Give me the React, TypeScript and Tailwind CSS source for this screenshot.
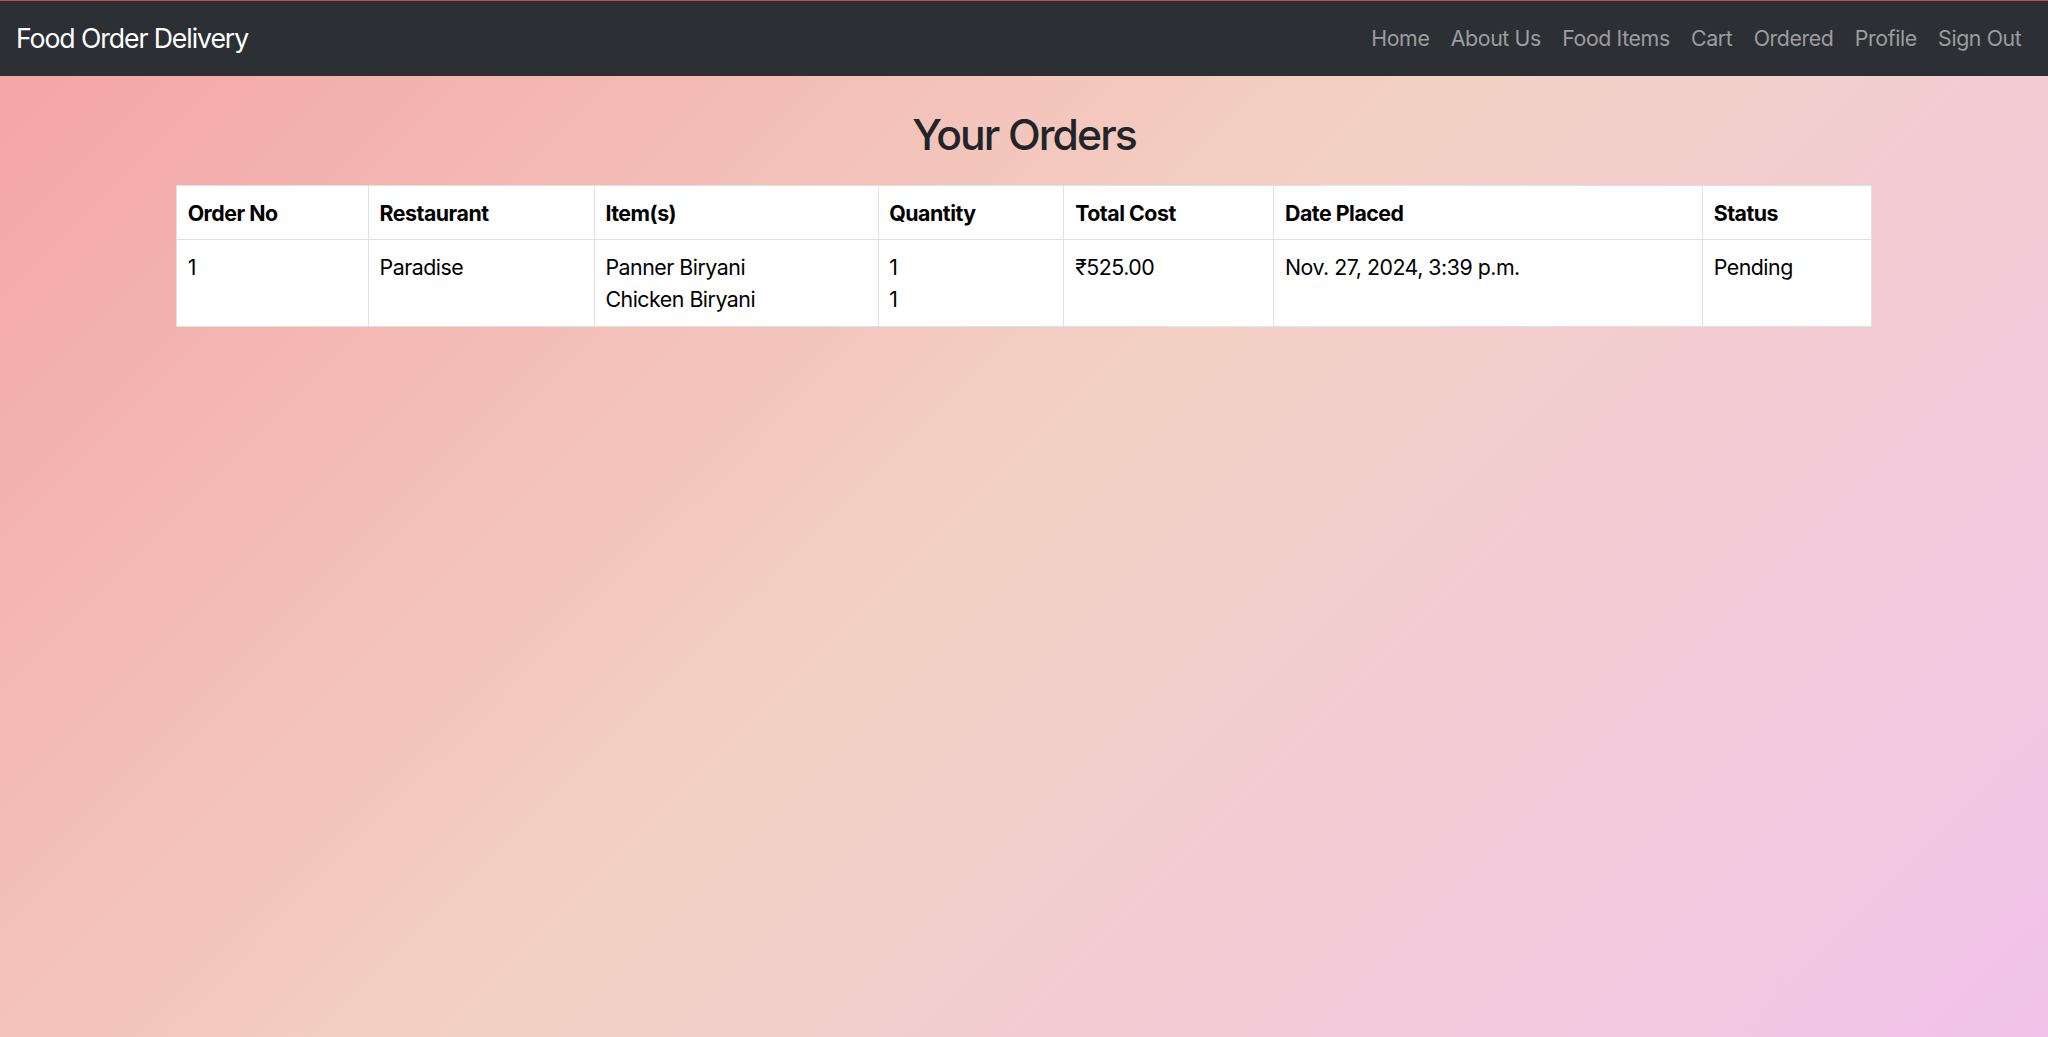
import React from "react";

const links = ["Home", "About Us", "Food Items", "Cart", "Ordered", "Profile", "Sign Out"];

export default function App() {
  return (
    <div
      className="min-h-screen w-full bg-[linear-gradient(135deg,#f4a3a4_0%,#f3d2c5_50%,#f2c2ea_100%)] text-[#212529]"
      style={{ fontFamily: "Inter, 'Noto Sans', sans-serif" }}
    >
      <nav className="h-[76px] bg-[#2c3034] border-t border-[#c24b4b] flex items-center px-[16px] pb-[2px]">
        <a className="text-white text-[26.67px] leading-[40px] tracking-[-1.1px] whitespace-nowrap">
          Food Order Delivery
        </a>
        <ul className="ml-auto flex items-center">
          {links.map((l) => (
            <li key={l}>
              <a className="block px-[10.67px] text-[21.33px] leading-[32px] text-[#9c9d9f] tracking-[-0.4px] whitespace-nowrap">
                {l}
              </a>
            </li>
          ))}
        </ul>
      </nav>

      <main className="flex flex-col items-center">
        <h2 className="mt-[33px] text-[42.67px] leading-[51px] font-medium text-[#212529] tracking-[-1.9px]">
          Your Orders
        </h2>
        <table className="mt-[25px] w-[1696px] bg-white border-collapse text-[21.33px] leading-[32px] text-black tracking-[-0.48px]">
          <thead>
            <tr>
              <th className="w-[192px] text-left font-bold px-[10.67px] py-[10.67px] border border-[#dee2e6]">Order No</th>
              <th className="w-[226px] text-left font-bold px-[10.67px] py-[10.67px] border border-[#dee2e6]">Restaurant</th>
              <th className="w-[284px] text-left font-bold px-[10.67px] py-[10.67px] border border-[#dee2e6]">Item(s)</th>
              <th className="w-[186px] text-left font-bold px-[10.67px] py-[10.67px] border border-[#dee2e6]">Quantity</th>
              <th className="w-[210px] text-left font-bold px-[10.67px] py-[10.67px] border border-[#dee2e6]">Total Cost</th>
              <th className="w-[429px] text-left font-bold px-[10.67px] py-[10.67px] border border-[#dee2e6]">Date Placed</th>
              <th className="w-[169px] text-left font-bold px-[10.67px] py-[10.67px] border border-[#dee2e6]">Status</th>
            </tr>
          </thead>
          <tbody>
            <tr className="align-top">
              <td className="px-[10.67px] py-[10.67px] border border-[#dee2e6]">1</td>
              <td className="px-[10.67px] py-[10.67px] border border-[#dee2e6]">Paradise</td>
              <td className="px-[10.67px] py-[10.67px] border border-[#dee2e6]">
                <div>Panner Biryani</div>
                <div>Chicken Biryani</div>
              </td>
              <td className="px-[10.67px] py-[10.67px] border border-[#dee2e6]">
                <div>1</div>
                <div>1</div>
              </td>
              <td className="px-[10.67px] py-[10.67px] border border-[#dee2e6]">₹525.00</td>
              <td className="px-[10.67px] py-[10.67px] border border-[#dee2e6]">Nov. 27, 2024, 3:39 p.m.</td>
              <td className="px-[10.67px] py-[10.67px] border border-[#dee2e6]">Pending</td>
            </tr>
          </tbody>
        </table>
      </main>
    </div>
  );
}
